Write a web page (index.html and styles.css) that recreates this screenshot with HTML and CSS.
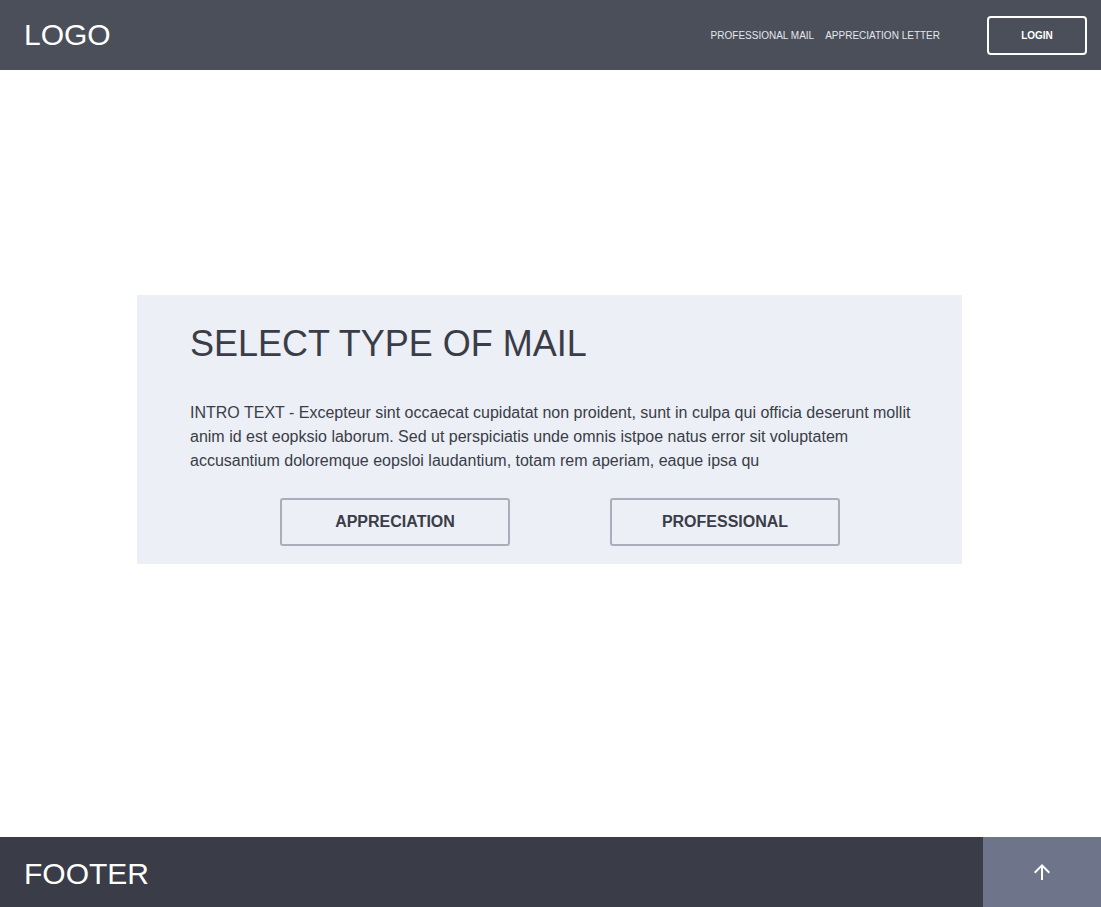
FILE: index.html
```html
<!DOCTYPE html>
<html lang="en">
<head>
<meta charset="utf-8">
<title>Select type of mail</title>
<link rel="stylesheet" href="styles.css">
</head>
<body>
<div class="page">
  <header class="header">
    <div class="logo">LOGO</div>
    <nav class="nav">
      <a class="nav-link" href="#">PROFESSIONAL MAIL</a>
      <a class="nav-link" href="#">APPRECIATION LETTER</a>
    </nav>
    <button class="login">LOGIN</button>
  </header>
  <main class="main">
    <section class="card">
      <h1 class="title">SELECT TYPE OF MAIL</h1>
      <p class="intro">INTRO TEXT - Excepteur sint occaecat cupidatat non proident, sunt in culpa qui officia deserunt mollit anim id est eopksio laborum. Sed ut perspiciatis unde omnis istpoe natus error sit voluptatem accusantium doloremque eopsloi laudantium, totam rem aperiam, eaque ipsa qu</p>
      <div class="actions">
        <button class="choice">APPRECIATION</button>
        <button class="choice">PROFESSIONAL</button>
      </div>
    </section>
  </main>
  <footer class="footer">
    <div class="footer-text">FOOTER</div>
    <button class="to-top" aria-label="Back to top">
      <svg width="24" height="24" viewBox="0 0 24 24"><path fill="#ffffff" d="M4 12l1.41 1.41L11 7.83V20h2V7.83l5.58 5.59L20 12l-8-8-8 8z"/></svg>
    </button>
  </footer>
</div>
</body>
</html>
```

FILE: styles.css
```css
* { box-sizing: border-box; }
html, body { margin: 0; padding: 0; }
body {
  font-family: "Liberation Sans", Arial, sans-serif;
  background: #ffffff;
  color: #3a3d47;
}
.page {
  display: flex;
  flex-direction: column;
  min-height: 907px;
}
.header {
  height: 70px;
  background: #4b4f5a;
  display: flex;
  align-items: center;
  padding: 0 14px 0 24px;
}
.logo {
  color: #ffffff;
  font-size: 30px;
  line-height: 1;
  flex: 1;
}
.nav {
  display: flex;
  gap: 11px;
  margin-right: 47px;
}
.nav-link {
  color: #e4e6ec;
  font-size: 10px;
  text-decoration: none;
}
.login {
  width: 100px;
  height: 39px;
  border: 2px solid #ffffff;
  border-radius: 4px;
  background: transparent;
  color: #ffffff;
  font-family: inherit;
  font-weight: bold;
  font-size: 10px;
  padding: 0;
}
.main {
  flex: 1;
  padding: 225px 0 0 137px;
}
.card {
  width: 825px;
  background: #eceff6;
  padding: 27px 45px 18px 53px;
}
.title {
  margin: 0;
  font-weight: normal;
  font-size: 36px;
  line-height: 43px;
  color: #3a3d47;
}
.intro {
  margin: 36px 0 0;
  font-size: 16px;
  line-height: 24px;
  color: #3a3d47;
}
.actions {
  display: flex;
  gap: 100px;
  padding-left: 90px;
  margin-top: 25px;
}
.choice {
  width: 230px;
  height: 48px;
  border: 2px solid #abadbb;
  border-radius: 3px;
  background: transparent;
  font-family: inherit;
  font-weight: bold;
  font-size: 16px;
  color: #3a3d47;
  padding: 0;
}
.footer {
  height: 70px;
  background: #3a3d48;
  display: flex;
  align-items: center;
  padding-left: 24px;
}
.footer-text {
  flex: 1;
  color: #ffffff;
  font-size: 30px;
  line-height: 1;
  padding-top: 3px;
}
.to-top {
  width: 118px;
  height: 70px;
  background: #6e7489;
  border: none;
  padding: 0;
  display: flex;
  align-items: center;
  justify-content: center;
}
.to-top svg { display: block; }
```
